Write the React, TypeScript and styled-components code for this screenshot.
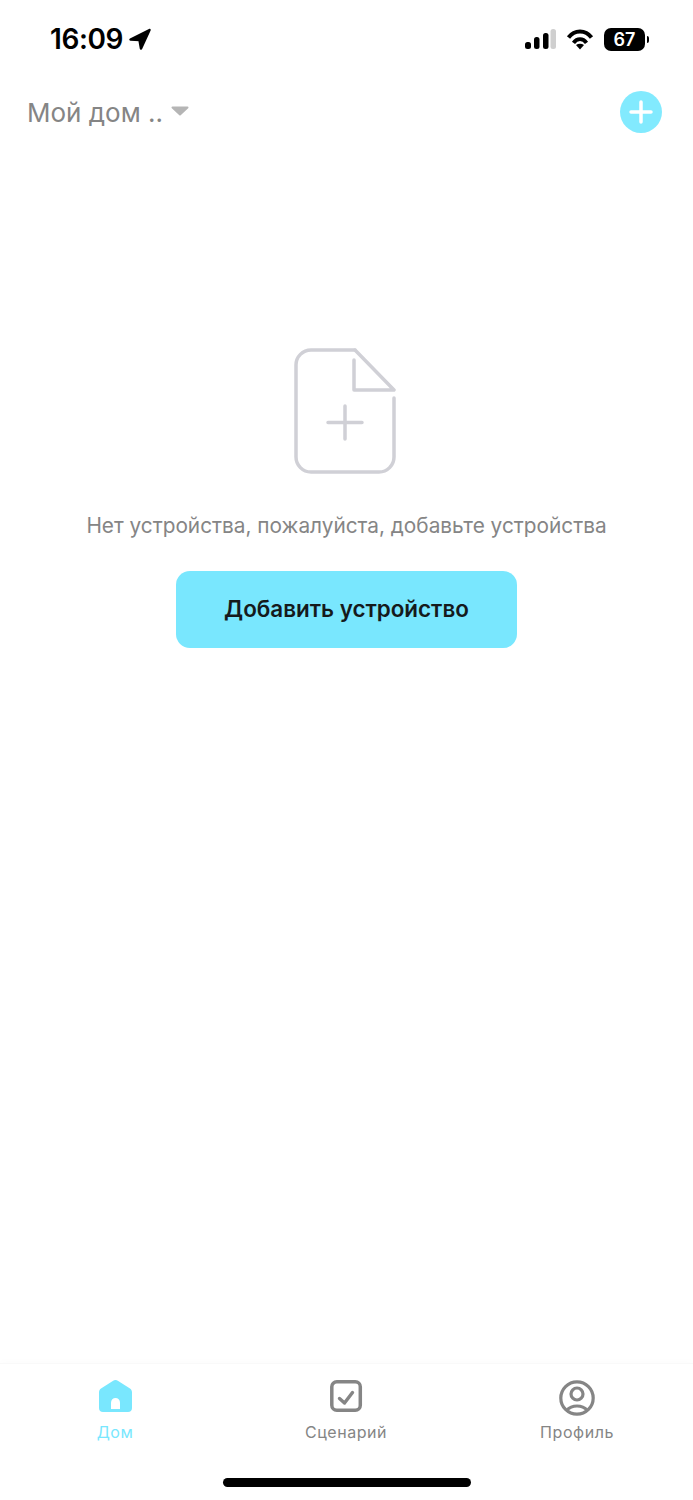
import React from 'react';
import styled, { createGlobalStyle } from 'styled-components';

const ACCENT = '#79e7fe';
const MUTED = '#858585';
const OUTLINE = '#d0d0d6';

const GlobalStyle = createGlobalStyle`
  html, body {
    margin: 0;
    padding: 0;
    background: #ffffff;
  }
  body {
    font-family: Inter, "Noto Sans", "Liberation Sans", sans-serif;
  }
`;

const Page = styled.div`
  width: 693px;
  height: 1500px;
  display: flex;
  flex-direction: column;
  background: #ffffff;
  overflow: hidden;
`;

const StatusBar = styled.div`
  height: 78px;
  flex: none;
  box-sizing: border-box;
  padding: 22px 44px 0 50px;
  display: flex;
  justify-content: space-between;
  align-items: flex-start;
`;

const TimeGroup = styled.div`
  display: flex;
  align-items: center;
  gap: 5px;
  height: 34px;
`;

const Time = styled.span`
  font-size: 28px;
  font-weight: 600;
  letter-spacing: -0.4px;
  color: #000000;
`;

const StatusIcons = styled.div`
  display: flex;
  align-items: center;
  gap: 10px;
  height: 34px;
`;

const Battery = styled.div`
  display: flex;
  align-items: center;
  gap: 2px;
`;

const BatteryBody = styled.div`
  width: 41px;
  height: 23px;
  border-radius: 7px;
  background: #000000;
  color: #ffffff;
  font-size: 18px;
  font-weight: 600;
  display: flex;
  align-items: center;
  justify-content: center;
`;

const BatteryCap = styled.div`
  width: 2px;
  height: 7px;
  border-radius: 0 2px 2px 0;
  background: #000000;
`;

const Header = styled.header`
  height: 68px;
  flex: none;
  box-sizing: border-box;
  padding: 0 31px 0 27px;
  display: flex;
  align-items: center;
  justify-content: space-between;
`;

const HomeSelect = styled.div`
  display: flex;
  align-items: center;
  gap: 8px;
`;

const HomeName = styled.span`
  font-size: 26px;
  color: ${MUTED};
`;

const Caret = styled.svg`
  width: 18px;
  height: 10px;
  margin-bottom: 2px;
  display: block;
`;

const AddRound = styled.button`
  width: 42px;
  height: 42px;
  padding: 0;
  border: none;
  border-radius: 50%;
  background: #82eafe;
  display: flex;
  align-items: center;
  justify-content: center;
`;

const Main = styled.main`
  flex: 1;
  padding-top: 202px;
  display: flex;
  flex-direction: column;
  align-items: center;
`;

const EmptyIcon = styled.svg`
  width: 102px;
  height: 126px;
  margin-right: 3px;
  display: block;
`;

const EmptyText = styled.p`
  margin: 40px 0 0;
  font-size: 20.8px;
  line-height: 24px;
  color: ${MUTED};
`;

const AddDevice = styled.button`
  width: 341px;
  height: 77px;
  margin-top: 33px;
  padding: 0 0 2px;
  border: none;
  border-radius: 14px;
  background: ${ACCENT};
  color: #151a1c;
  font-family: inherit;
  font-size: 22.4px;
  font-weight: 600;
`;

const TabBar = styled.nav`
  height: 137px;
  flex: none;
  box-sizing: border-box;
  border-top: 1px solid #f9f9f9;
  box-shadow: 0 -3px 6px rgba(0, 0, 0, 0.012);
  padding: 16px 0 0;
  position: relative;
  display: grid;
  grid-template-columns: 230px 232px 230px;
  align-items: start;
`;

const Tab = styled.div`
  display: flex;
  flex-direction: column;
  align-items: center;
  gap: 6px;
`;

const TabIcon = styled.svg`
  width: 36px;
  height: 36px;
  display: block;
`;

const TabLabel = styled.span<{ $active?: boolean }>`
  font-size: 16px;
  line-height: 20px;
  letter-spacing: 0.55px;
  color: ${props => (props.$active ? ACCENT : MUTED)};
`;

const HomeIndicator = styled.div`
  position: absolute;
  left: 223px;
  bottom: 13px;
  width: 248px;
  height: 9px;
  border-radius: 5px;
  background: #000000;
`;

const App: React.FC = () => (
  <Page>
    <GlobalStyle />
    <StatusBar>
      <TimeGroup>
        <Time>16:09</Time>
        <svg width="24" height="24" viewBox="0 0 24 24">
          <path
            d="M21.5 3 2.500 12.500l9 .5 1.500 8.500z"
            fill="#000"
            stroke="#000"
            strokeWidth="2.500"
            strokeLinejoin="round"
          />
        </svg>
      </TimeGroup>
      <StatusIcons>
        <svg width="33" height="22" viewBox="0 0 33 22">
          <rect x="2" y="14" width="6" height="7" rx="2.500" fill="#000" />
          <rect x="11" y="9" width="5.500" height="12" rx="2.500" fill="#000" />
          <rect x="20" y="5" width="5.500" height="16" rx="2.500" fill="#000" />
          <rect x="27.500" y="1" width="5.500" height="20" rx="2.500" fill="#cfcfcf" />
        </svg>
        <svg width="28" height="22" viewBox="0 0 28 22">
          <path d="M2.500 9.500C8.500 1.500 19.500 1.500 25.500 9.500" fill="none" stroke="#000" strokeWidth="4" />
          <path d="M7.500 14.800C11 10 17 10 20.500 14.800" fill="none" stroke="#000" strokeWidth="3.800" />
          <path d="M14 21.500 10 17c2.500-1.800 5.500-1.800 8 0z" fill="#000" />
        </svg>
        <Battery>
          <BatteryBody>67</BatteryBody>
          <BatteryCap />
        </Battery>
      </StatusIcons>
    </StatusBar>

    <Header>
      <HomeSelect>
        <HomeName>Мой дом ..</HomeName>
        <Caret viewBox="0 0 18 10">
          <path d="M1.500 1.500h15L9 8.500z" fill="#b5b5b5" stroke="#b5b5b5" strokeWidth="2" strokeLinejoin="round" />
        </Caret>
      </HomeSelect>
      <AddRound aria-label="add">
        <svg width="26" height="26" viewBox="0 0 26 26">
          <path d="M13 3v20M3 13h20" stroke="#fff" strokeWidth="3.500" strokeLinecap="round" />
        </svg>
      </AddRound>
    </Header>

    <Main>
      <EmptyIcon viewBox="0 0 102 126">
        <path
          d="M61 2H17C8.700 2 2 8.700 2 17v92c0 8.300 6.700 15 15 15h68c8.300 0 15-6.700 15-15V50"
          fill="none"
          stroke={OUTLINE}
          strokeWidth="3.500"
          strokeLinecap="round"
        />
        <path
          d="M61 2l39 40H60V12"
          fill="none"
          stroke={OUTLINE}
          strokeWidth="3.500"
          strokeLinecap="round"
          strokeLinejoin="round"
        />
        <path d="M51 58v33M34 74.500h34" stroke={OUTLINE} strokeWidth="3.500" strokeLinecap="round" />
      </EmptyIcon>
      <EmptyText>Нет устройства, пожалуйста, добавьте устройства</EmptyText>
      <AddDevice>Добавить устройство</AddDevice>
    </Main>

    <TabBar>
      <Tab>
        <TabIcon viewBox="0 0 36 36">
          <path
            d="M15.800 1 4 8.500C2.600 9.500 2 10.800 2 12.500V28c0 2.500 1.500 4 4 4h25c2.500 0 4-1.500 4-4V12.500c0-1.700-.6-3-2-4L21.200 1c-1.700-1.200-3.700-1.200-5.400 0z"
            fill={ACCENT}
          />
          <path d="M14 29v-6.500c0-2.500 2-4.500 4.500-4.500s4.500 2 4.500 4.500V29z" fill="#fff" />
        </TabIcon>
        <TabLabel $active>Дом</TabLabel>
      </Tab>
      <Tab>
        <TabIcon viewBox="0 0 36 36">
          <rect x="3.800" y="1.800" width="28.500" height="28.500" rx="5" fill="none" stroke={MUTED} strokeWidth="3.500" />
          <path d="M11.500 18.500l5 4.500 8-10.500" fill="none" stroke={MUTED} strokeWidth="3.400" strokeLinecap="round" strokeLinejoin="round" />
        </TabIcon>
        <TabLabel>Сценарий</TabLabel>
      </Tab>
      <Tab>
        <TabIcon viewBox="0 0 36 36">
          <circle cx="18" cy="18" r="16.200" fill="none" stroke={MUTED} strokeWidth="3.200" />
          <circle cx="18" cy="14" r="6" fill="none" stroke={MUTED} strokeWidth="3.200" />
          <path d="M7.500 30.500C13 24.500 23 24.500 28.500 30.500" fill="none" stroke={MUTED} strokeWidth="3.200" />
        </TabIcon>
        <TabLabel>Профиль</TabLabel>
      </Tab>
      <HomeIndicator />
    </TabBar>
  </Page>
);

export default App;
